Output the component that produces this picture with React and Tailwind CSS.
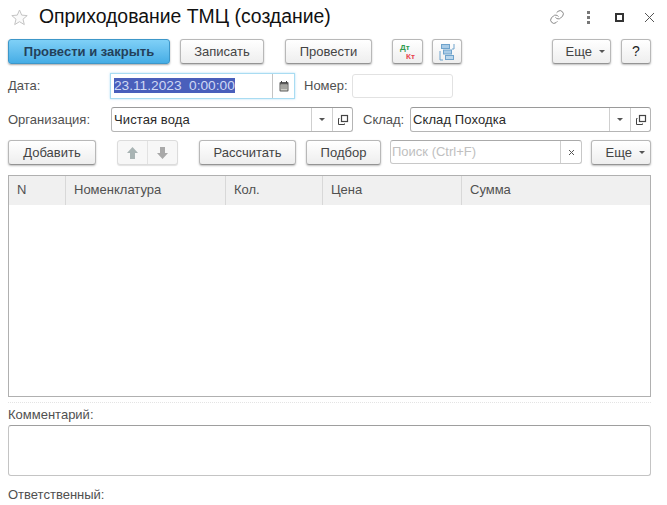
import React from "react";

const btnBase =
  "flex items-center justify-center rounded-[3px] border border-[#b8b8b8] border-b-[#949494] bg-gradient-to-b from-white to-[#eeeeee] shadow-[0_1px_2px_rgba(0,0,0,0.25)] text-[13px] text-[#444]";

function Btn({ w, children }) {
  return <div className={`${btnBase} ${w} h-[25px] shrink-0`}>{children}</div>;
}

function Caret({ className = "" }) {
  return <span className={`inline-block border-x-[3px] border-t-[3px] border-x-transparent border-t-[#555] ${className}`} />;
}

function OpenIcon() {
  return (
    <svg width="12" height="12" viewBox="0 0 12 12" fill="none" stroke="#444" strokeWidth="1">
      <rect x="4.5" y="1.5" width="6" height="6" strokeWidth="1.2" />
      <path d="M2.5 4.5h-1v6h6v-1" />
    </svg>
  );
}

function Field({ w, text }) {
  return (
    <div className={`${w} h-[25px] shrink-0 flex items-center rounded-[3px] border border-[#b5b5b5] border-t-[#9a9a9a] text-[13px] text-[#2a2a2a]`}>
      <span className="flex-1 pl-[2px] tracking-[0.1px]">{text}</span>
      <div className="w-[21px] h-full flex items-center justify-center border-l border-[#cfcfcf]">
        <Caret />
      </div>
      <div className="w-[20px] h-full flex items-center justify-center border-l border-[#cfcfcf]">
        <OpenIcon />
      </div>
    </div>
  );
}

const columns = [
  { name: "N", w: "w-[56px]" },
  { name: "Номенклатура", w: "w-[160px]" },
  { name: "Кол.", w: "w-[97px]" },
  { name: "Цена", w: "w-[139px]" },
  { name: "Сумма", w: "flex-1" },
];

export default function App() {
  return (
    <div className="w-[667px] h-[505px] overflow-hidden bg-white font-['Liberation_Sans',Arial,sans-serif] text-[13px] text-[#505050]">
      {/* Заголовок */}
      <div className="h-[39px] flex items-center pl-[11px] pr-[12px] pb-[5px]">
        <svg width="17" height="17" viewBox="0 0 17 17" fill="#fafafa" stroke="#c4c4c4" strokeWidth="1">
          <path d="M8.5 1l2.2 5.1 5.5.5-4.2 3.6 1.3 5.4-4.8-2.9-4.8 2.9 1.3-5.4L.8 6.6l5.5-.5z" />
        </svg>
        <span className="ml-[11px] text-[19.4px] text-[#111] whitespace-nowrap">Оприходование ТМЦ (создание)</span>
        <div className="ml-auto flex items-center">
          <svg width="16" height="16" viewBox="0 0 24 24" fill="none" stroke="#8a8a8a" strokeWidth="1.5" strokeLinecap="round">
            <path d="M10 13a5 5 0 0 0 7.5.5l3-3a5 5 0 0 0-7-7l-1.7 1.7" />
            <path d="M14 11a5 5 0 0 0-7.5-.5l-3 3a5 5 0 0 0 7 7l1.7-1.7" />
          </svg>
          <div className="ml-[22px] flex flex-col gap-[2px]">
            <span className="w-[3px] h-[3px] bg-[#777]" />
            <span className="w-[3px] h-[3px] bg-[#777]" />
            <span className="w-[3px] h-[3px] bg-[#777]" />
          </div>
          <span className="ml-[25px] w-[9px] h-[9px] border-2 border-[#333]" />
          <svg className="ml-[20px]" width="11" height="11" viewBox="0 0 11 11" stroke="#555" strokeWidth="1">
            <path d="M1 1l9 9M10 1l-9 9" />
          </svg>
        </div>
      </div>

      <div className="px-2">
        {/* Командная панель */}
        <div className="flex h-[25px]">
          <div className="w-[162px] h-[25px] flex items-center justify-center rounded-[3px] border border-[#3d97c9] bg-gradient-to-b from-[#7fd0f7] to-[#45ade5] shadow-[0_1px_2px_rgba(0,0,0,0.35)] font-bold text-[13px] text-[#23405a]">
            Провести и закрыть
          </div>
          <Btn w="ml-[10px] w-[84px]">Записать</Btn>
          <Btn w="ml-[21px] w-[87px]">Провести</Btn>
          <Btn w="ml-[20px] w-[31px]">
            <div className="flex flex-col text-[8px] font-bold leading-[9px]">
              <span className="text-[#2e9b4f]">Дт</span>
              <span className="ml-[6px] text-[#e8424b]">Кт</span>
            </div>
          </Btn>
          <Btn w="ml-[9px] w-[30px]">
            <svg width="16" height="18" viewBox="0 0 16 18" fill="#a9cbe6" stroke="#6fa3cc" strokeWidth="1">
              <rect x="2.5" y="1.5" width="8" height="4" />
              <rect x="4.5" y="7" width="8" height="4" />
              <rect x="6.5" y="12.5" width="8" height="4" fill="#bcd7ec" />
              <path d="M1 8v9h3M15 1v5h-2" fill="none" />
            </svg>
          </Btn>
          <Btn w="ml-[90px] w-[59px] justify-end pr-[5px] gap-[7px]">
            <span>Еще</span>
            <Caret />
          </Btn>
          <Btn w="ml-[10px] w-[30px]">
            <span className="text-[14px] text-[#222]">?</span>
          </Btn>
        </div>

        {/* Дата и номер */}
        <div className="mt-[9px] flex items-center h-[26px]">
          <span className="w-[102px]">Дата:</span>
          <div className="w-[185px] h-[26px] flex items-center border border-[#a9dcf2] shadow-[0_0_2px_rgba(120,200,240,0.6)]">
            <div className="flex-1 pl-[3px] text-[13.7px]">
              <span className="bg-[#4a5fbb] text-[#cfd8f4] whitespace-pre">23.11.2023  0:00:00</span>
            </div>
            <div className="w-[22px] h-[24px] flex items-center justify-center border-l border-[#c4c4c4]">
              <svg width="10" height="11" viewBox="0 0 10 11">
                <rect x="0.5" y="1" width="9" height="9.5" rx="1" fill="#5a5a5a" />
                <rect x="1.5" y="3.5" width="7" height="6" fill="#cfcfc8" />
                <path d="M2.5 0v2M7.5 0v2" stroke="#444" />
                <path d="M2 5h6M2 7h6" stroke="#666" strokeWidth="0.8" />
              </svg>
            </div>
          </div>
          <span className="ml-[9px] w-[48px]">Номер:</span>
          <div className="w-[101px] h-[24px] rounded-[3px] border border-[#e2e2e2]" />
        </div>

        {/* Организация и склад */}
        <div className="mt-[8px] flex items-center h-[25px]">
          <span className="w-[103px]">Организация:</span>
          <Field w="w-[242px]" text="Чистая вода" />
          <span className="ml-[10px] w-[47px]">Склад:</span>
          <Field w="w-[241px]" text="Склад Походка" />
        </div>

        {/* Панель таблицы */}
        <div className="mt-[8px] flex h-[26px]">
          <Btn w="w-[88px]">Добавить</Btn>
          <div className="ml-[21px] w-[61px] h-[25px] flex rounded-[3px] border border-[#dcdcdc] bg-[#f7f7f7] shadow-[0_1px_1px_rgba(0,0,0,0.12)]">
            <div className="flex-1 flex items-center justify-center border-r border-[#e2e2e2]">
              <svg width="11" height="12" viewBox="0 0 11 12" fill="#a9b4b4">
                <path d="M5.5 0L11 6H8v6H3V6H0z" />
              </svg>
            </div>
            <div className="flex-1 flex items-center justify-center">
              <svg width="11" height="12" viewBox="0 0 11 12" fill="#a9a9a9">
                <path d="M5.5 12L0 6h3V0h5v6h3z" />
              </svg>
            </div>
          </div>
          <Btn w="ml-[21px] w-[97px]">Рассчитать</Btn>
          <Btn w="ml-[10px] w-[75px]">Подбор</Btn>
          <div className="ml-[9px] w-[192px] h-[24px] flex items-center rounded-[3px] border border-[#c8c8c8] border-t-[#aaa] text-[13px] text-[#c0c0c0]">
            <span className="flex-1 pl-[1px]">Поиск (Ctrl+F)</span>
            <div className="w-[21px] h-full flex items-center justify-center border-l border-[#cfcfcf]">
              <svg width="7" height="7" viewBox="0 0 7 7" stroke="#555" strokeWidth="1">
                <path d="M1 1l5 5M6 1l-5 5" />
              </svg>
            </div>
          </div>
          <Btn w="ml-[9px] w-[60px] justify-end pr-[5px] gap-[7px]">
            <span>Еще</span>
            <Caret />
          </Btn>
        </div>

        {/* Таблица */}
        <div className="mt-[9px] w-[643px] h-[222px] border border-[#b0b0b0]">
          <div className="flex h-[29px] bg-[#f0f0f0]">
            {columns.map((c, i) => (
              <div
                key={c.name}
                className={`${c.w} flex items-center ${i === 0 ? "pl-[8px]" : "pl-[8px] border-l border-[#d8d8d8]"} pb-[1px]`}
              >
                {c.name}
              </div>
            ))}
          </div>
        </div>

        <div className="mt-[5px] w-[643px] border-t border-dotted border-[#e4e4e4]" />

        <div className="mt-[3px] h-[17px] leading-[17px]">Комментарий:</div>
        <div className="mt-[2px] w-[643px] h-[51px] rounded-[3px] border border-[#c4c4c4] border-t-[#9e9e9e]" />
        <div className="mt-[10px] h-[17px] leading-[17px]">Ответственный:</div>
      </div>
    </div>
  );
}
